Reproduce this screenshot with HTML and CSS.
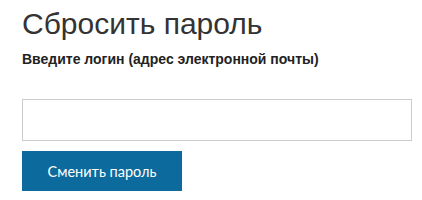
FILE: index.html
```html
<!DOCTYPE html>
<html lang="ru">
<head>
<meta charset="utf-8">
<link rel="stylesheet" href="styles.css">
</head>
<body>
<main class="reset">
  <h1 class="reset__title">Сбросить пароль</h1>
  <label class="reset__label" for="login">Введите логин (адрес электронной почты)</label>
  <input class="reset__input" id="login" type="text">
  <button class="reset__button" type="button">Сменить пароль</button>
</main>
</body>
</html>
```
FILE: styles.css
```css
html, body {
  margin: 0;
  padding: 0;
  background: #fff;
}
.reset {
  display: flex;
  flex-direction: column;
  align-items: flex-start;
  padding: 6px 10px 0 22px;
}
.reset__title {
  margin: 0;
  font-family: "Liberation Sans", Arial, sans-serif;
  font-weight: normal;
  font-size: 30px;
  line-height: 36px;
  color: #333;
}
.reset__label {
  margin-top: 9px;
  font-family: "Liberation Sans", Arial, sans-serif;
  font-weight: bold;
  font-size: 14px;
  line-height: 16px;
  color: #222;
}
.reset__input {
  box-sizing: border-box;
  margin: 32px 0 0 0;
  width: 390px;
  height: 42px;
  border: 1px solid #ccc;
  padding: 0 8px;
  background: #fff;
}
.reset__button {
  box-sizing: border-box;
  margin-top: 10px;
  width: 160px;
  height: 40px;
  border: none;
  background: #0d6a9c;
  color: #fff;
  font-family: Lato, "Open Sans", sans-serif;
  font-size: 14.5px;
  cursor: pointer;
}
```
